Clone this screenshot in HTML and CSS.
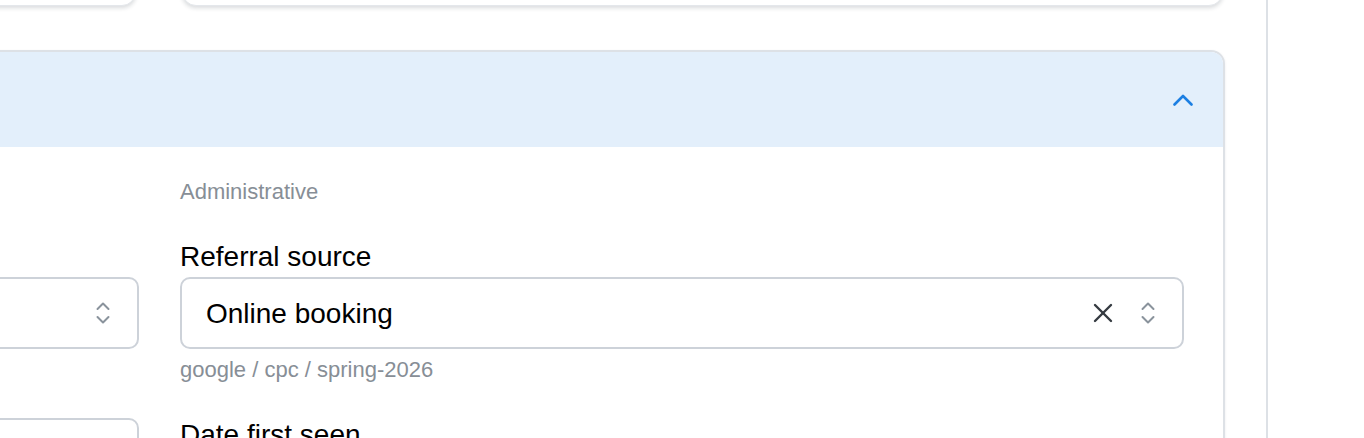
FILE: index.html
```html
<!DOCTYPE html>
<html lang="en">
<head>
<meta charset="utf-8">
<title>Patient details</title>
<link rel="stylesheet" href="styles.css">
</head>
<body>
<div class="page">
  <main class="main">
    <div class="content">
      <div class="top-row">
        <div class="top-card"></div>
        <div class="top-card"></div>
      </div>

      <section class="card">
        <header class="card-header">
          <span class="card-title"></span>
          <button class="collapse-btn" type="button" aria-label="Collapse">
            <svg width="20" height="12" viewBox="0 0 20 12" fill="none" stroke="currentColor" stroke-width="2.6" stroke-linecap="round" stroke-linejoin="round"><path d="M1.5 10.5 L10 2 L18.5 10.5"/></svg>
          </button>
        </header>
        <div class="card-body">
          <div class="column">
            <div class="section-title"></div>
            <div class="field">
              <div class="label"></div>
              <div class="select">
                <span class="select-value"></span>
                <span class="indicator">
                  <svg width="14" height="24" viewBox="0 0 14 24" fill="none" stroke="currentColor" stroke-width="2" stroke-linecap="round" stroke-linejoin="round"><path d="M1.5 8 L7 2.5 L12.5 8"/><path d="M1.5 16 L7 21.5 L12.5 16"/></svg>
                </span>
              </div>
            </div>
            <div class="field">
              <div class="label"></div>
              <div class="select">
                <span class="select-value"></span>
              </div>
            </div>
          </div>

          <div class="column">
            <div class="section-title">Administrative</div>
            <div class="field">
              <label class="label">Referral source</label>
              <div class="select">
                <span class="select-value">Online booking</span>
                <button class="clear-btn" type="button" aria-label="Clear">
                  <svg width="20" height="20" viewBox="0 0 20 20" fill="none" stroke="currentColor" stroke-width="2.4" stroke-linecap="round"><path d="M2 2 L18 18"/><path d="M18 2 L2 18"/></svg>
                </button>
                <span class="indicator">
                  <svg width="14" height="24" viewBox="0 0 14 24" fill="none" stroke="currentColor" stroke-width="2" stroke-linecap="round" stroke-linejoin="round"><path d="M1.5 8 L7 2.5 L12.5 8"/><path d="M1.5 16 L7 21.5 L12.5 16"/></svg>
                </span>
              </div>
              <div class="helper">google / cpc / spring-2026</div>
            </div>
            <div class="field">
              <label class="label">Date first seen</label>
              <div class="select">
                <span class="select-value"></span>
              </div>
            </div>
          </div>
        </div>
      </section>
    </div>
  </main>
  <aside class="sidebar"></aside>
</div>
</body>
</html>
```

FILE: styles.css
```css
* { box-sizing: border-box; }

html, body {
  margin: 0;
  padding: 0;
  background: #ffffff;
  font-family: "Liberation Sans", Arial, sans-serif;
  color: #000000;
  overflow: hidden;
}

.page {
  display: flex;
  height: 438px;
}

.main {
  flex: 0 0 1266px;
  overflow: hidden;
}

.sidebar {
  flex: 1;
  border-left: 2px solid #dde1e6;
}

.content {
  width: 2130px;
  margin-left: -905px;
}

.top-row {
  display: grid;
  grid-template-columns: 1fr 1fr;
  gap: 46px;
  margin-top: -114px;
  padding-right: 2px;
}

.top-card {
  height: 120px;
  background: #ffffff;
  border: 1px solid #e4e7eb;
  border-radius: 14px;
  box-shadow: 0 2px 4px rgba(20, 30, 45, 0.16);
}

.card {
  margin-top: 44px;
  border: 2px solid #dde1e6;
  border-radius: 14px;
  overflow: hidden;
  background: #ffffff;
  box-shadow: 0 1px 3px rgba(20, 30, 45, 0.08);
}

.card-header {
  height: 95px;
  background: #e3effb;
  display: flex;
  align-items: center;
  justify-content: space-between;
  padding: 0 20px 0 38px;
}

.collapse-btn {
  width: 40px;
  height: 40px;
  border: 0;
  background: transparent;
  padding: 0;
  display: flex;
  align-items: center;
  justify-content: center;
  color: #1c7fe2;
}

.card-body {
  display: grid;
  grid-template-columns: 1fr 1fr;
  column-gap: 41px;
  padding: 28px 39px 40px 38px;
}

.column {
  display: flex;
  flex-direction: column;
  gap: 27px;
}

.section-title {
  min-height: 33px;
  font-size: 22px;
  line-height: 33px;
  color: #878e96;
}

.field {
  display: flex;
  flex-direction: column;
}

.label {
  min-height: 42px;
  font-size: 28px;
  line-height: 42px;
  padding-top: 1px;
  box-sizing: content-box;
  height: 42px;
  color: #000000;
}

.select {
  height: 72px;
  margin-top: -1px;
  border: 2px solid #cdd2d9;
  border-radius: 10px;
  display: flex;
  align-items: center;
  padding: 0 22px 0 24px;
  background: #ffffff;
}

.select-value {
  flex: 1;
  font-size: 28px;
  line-height: 36px;
  padding-top: 2px;
  color: #000000;
}

.clear-btn {
  width: 36px;
  height: 36px;
  margin-right: 15px;
  border: 0;
  padding: 0;
  background: transparent;
  display: flex;
  align-items: center;
  justify-content: center;
  color: #353b41;
}

.indicator {
  width: 24px;
  height: 24px;
  display: flex;
  align-items: center;
  justify-content: center;
  color: #8a939c;
}

.helper {
  margin-top: 4px;
  font-size: 22px;
  line-height: 33px;
  color: #878e96;
}
```
